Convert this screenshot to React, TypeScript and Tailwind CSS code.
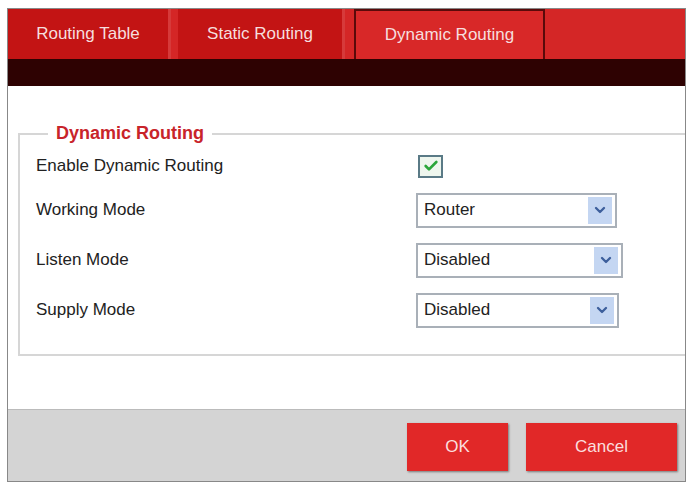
import { Check, ChevronDown } from 'lucide-react';

function Select({ value, w }: { value: string; w: string }) {
  return (
    <div className={`${w} h-[35px] flex items-center border-2 border-[#a9b0b8] bg-white pl-[6px] pr-[3px]`}>
      <span className="flex-1 text-[17px] text-[#222]">{value}</span>
      <div className="w-[24px] h-[27px] bg-[#c4d6f2] flex items-center justify-center">
        <ChevronDown size={16} strokeWidth={3.5} className="text-[#3d5f9c]" />
      </div>
    </div>
  );
}

export default function App() {
  const tab = "h-full flex items-center justify-center text-[17px] text-[#f6dede] border-r-[3px] border-[#d63a3a]";
  return (
    <div className="w-[689px] h-[489px] bg-white p-[8px_3px_7px_7px]" style={{ fontFamily: '"Liberation Sans", Arial, sans-serif' }}>
      <div className="h-full flex flex-col border border-[#888]">
        <div className="h-[50px] flex bg-[#d42626]">
          <div className={`${tab} w-[163px] bg-[#c31414]`}>Routing Table</div>
          <div className={`${tab} w-[167px] bg-[#c31414] ml-[7px]`}>Static Routing</div>
          <div className="h-full w-[191px] ml-[9px] flex items-center justify-center text-[17px] text-[#f6dede] bg-[#d82828] border-t-2 border-x-2 border-[#5a0a0a]">Dynamic Routing</div>
          <div className="flex-1" />
        </div>
        <div className="h-[27px] bg-[#2e0202]" />
        <div className="flex-1 bg-white pt-[34px] pl-[10px]">
          <fieldset className="border-2 border-r-0 border-[#d6d6d6] h-[236px] pl-[16px] pr-0 pb-0 pt-0">
            <legend className="px-[8px] ml-[12px] text-[18px] font-bold text-[#c8242a]">Dynamic Routing</legend>
            <div className="flex flex-col text-[17px] text-[#222]">
              <div className="flex items-center h-[38px]">
                <span className="w-[382px]">Enable Dynamic Routing</span>
                <div className="w-[25px] h-[23px] border-2 border-[#5a7a86] bg-[#eef6ee] flex items-center justify-center">
                  <Check size={16} strokeWidth={4} className="text-[#2aa63a]" />
                </div>
              </div>
              <div className="flex items-center h-[50px]">
                <span className="w-[380px]">Working Mode</span>
                <Select value="Router" w="w-[201px]" />
              </div>
              <div className="flex items-center h-[50px]">
                <span className="w-[380px]">Listen Mode</span>
                <Select value="Disabled" w="w-[207px]" />
              </div>
              <div className="flex items-center h-[50px]">
                <span className="w-[380px]">Supply Mode</span>
                <Select value="Disabled" w="w-[203px]" />
              </div>
            </div>
          </fieldset>
        </div>
        <div className="h-[72px] bg-[#d4d4d4] flex items-center justify-end gap-[18px] pr-[8px] pt-[2px] border-t border-[#bbb]">
          <button className="w-[101px] h-[48px] bg-[#e12828] text-[#fbdede] text-[17px] shadow-[1px_1px_2px_#777]">OK</button>
          <button className="w-[151px] h-[48px] bg-[#e12828] text-[#fbdede] text-[17px] shadow-[1px_1px_2px_#777]">Cancel</button>
        </div>
      </div>
    </div>
  );
}
